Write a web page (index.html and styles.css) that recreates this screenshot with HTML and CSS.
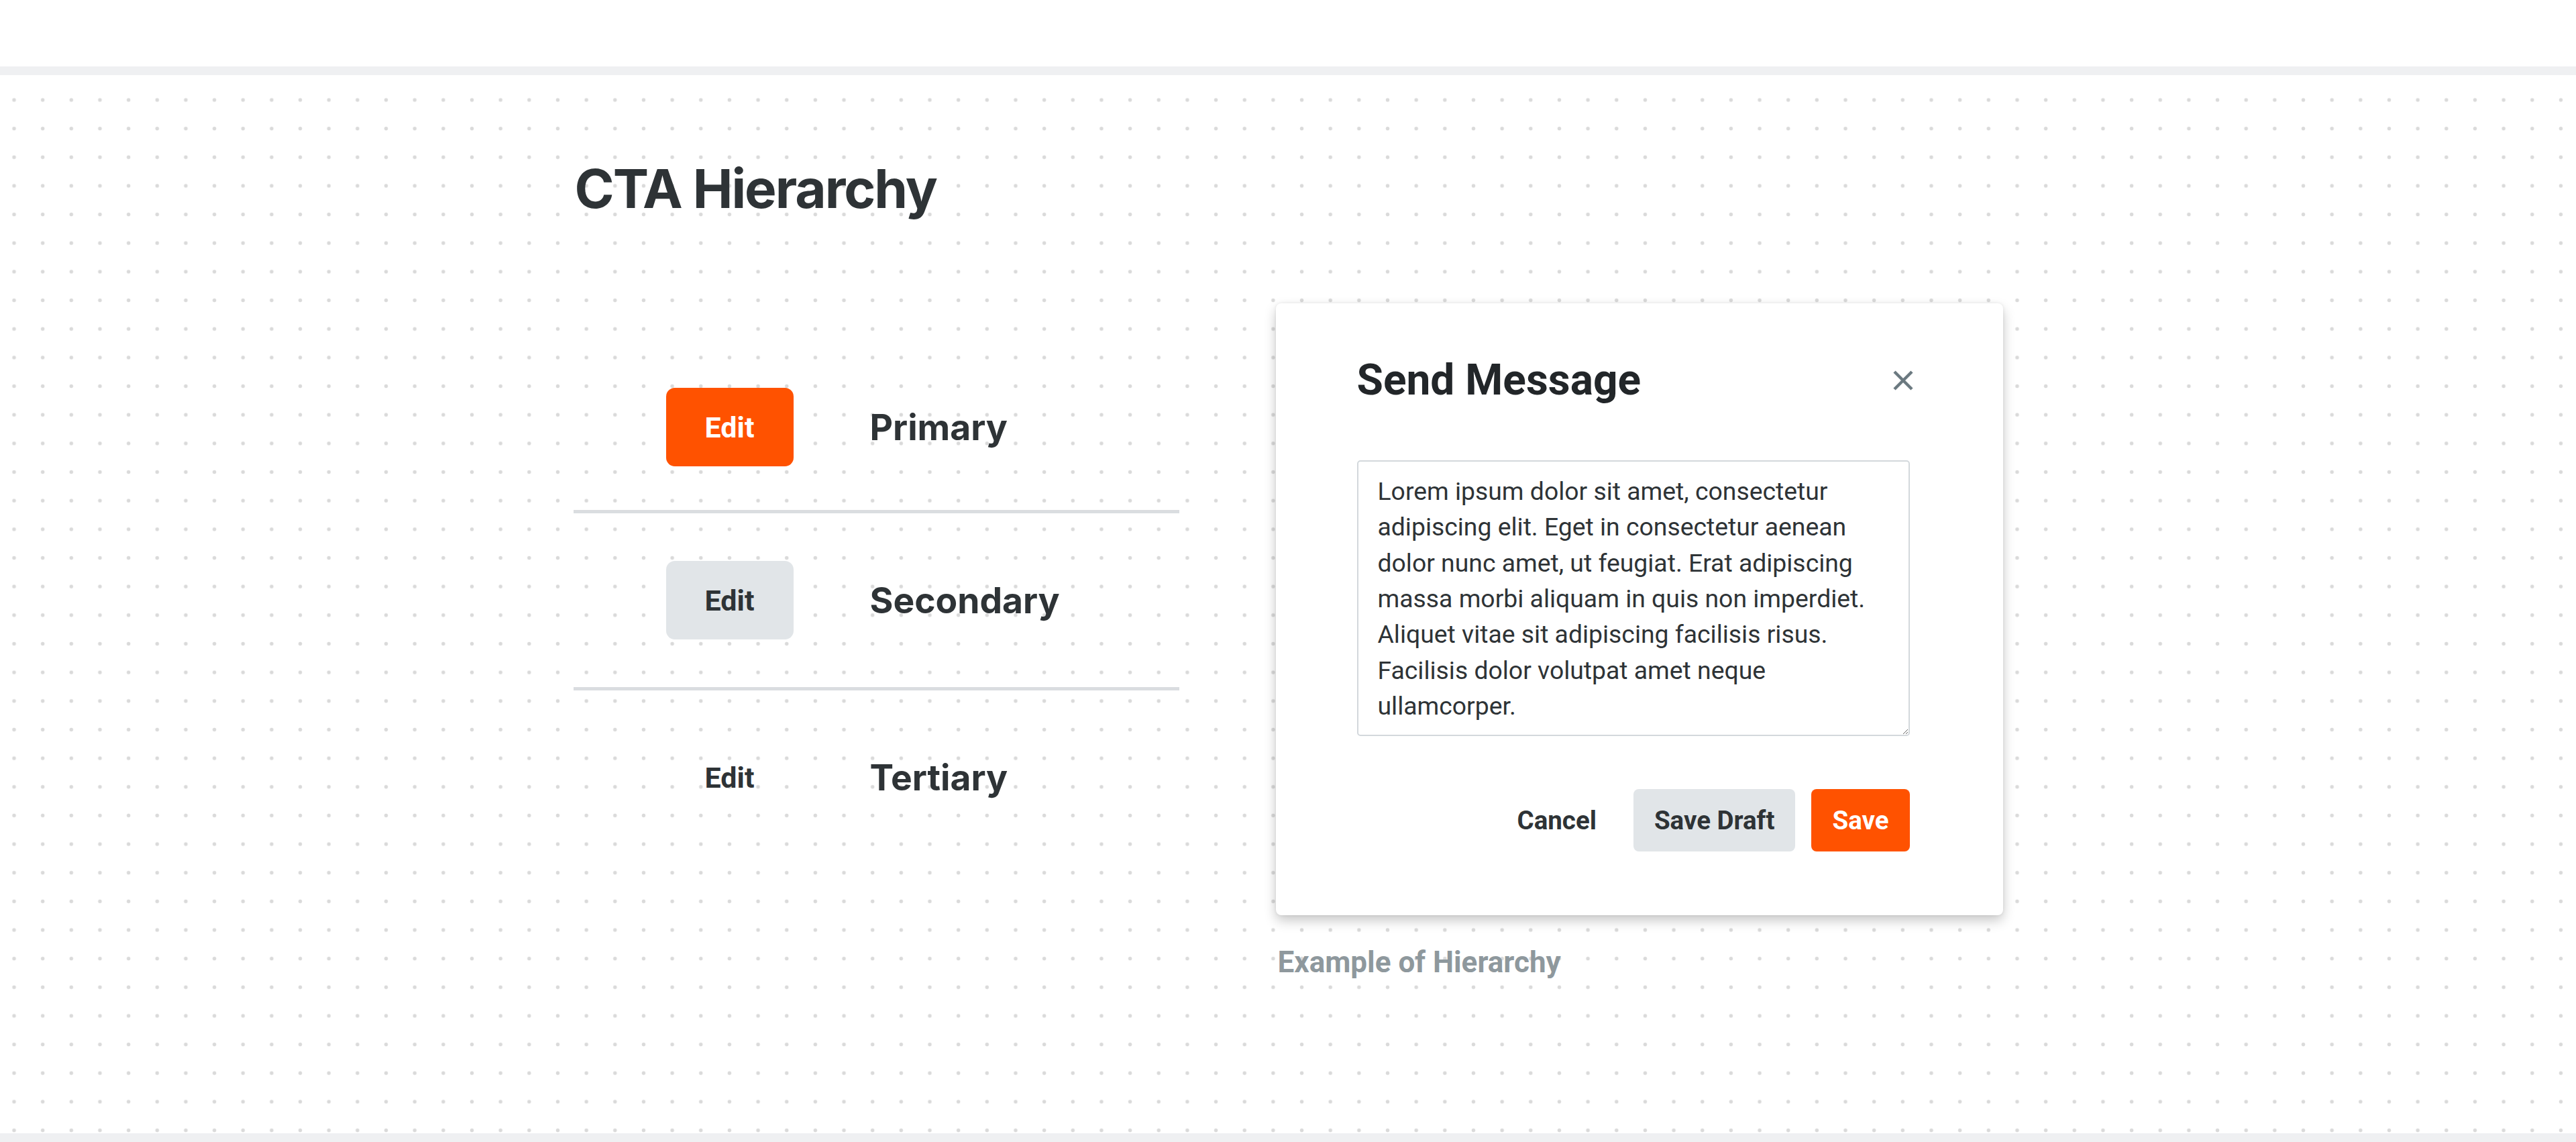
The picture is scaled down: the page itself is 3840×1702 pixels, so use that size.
FILE: index.html
```html
<!DOCTYPE html>
<html lang="en">
<head>
    <meta charset="UTF-8">
    <meta name="viewport" content="width=device-width, initial-scale=1.0">
    <title>CTA Hierarchy</title>
    <link rel="stylesheet" href="styles.css">
</head>
<body>
    <div class="topbar"></div>
    <main class="canvas">
        <div class="container">
            <h1 class="page-title">CTA Hierarchy</h1>
            <div class="content">
                <div class="cta-list">
                    <div class="cta-row">
                        <button class="btn btn-primary">Edit</button>
                        <span class="cta-label">Primary</span>
                    </div>
                    <div class="cta-row">
                        <button class="btn btn-secondary">Edit</button>
                        <span class="cta-label">Secondary</span>
                    </div>
                    <div class="cta-row">
                        <button class="btn btn-tertiary">Edit</button>
                        <span class="cta-label">Tertiary</span>
                    </div>
                </div>
                <div class="example">
                    <div class="modal">
                        <div class="modal-header">
                            <h2>Send Message</h2>
                            <svg class="close-icon" width="32" height="32" viewBox="0 0 32 32">
                                <path d="M3 3 L29 29 M29 3 L3 29" stroke="#6b7980" stroke-width="4.5" fill="none"/>
                            </svg>
                        </div>
                        <textarea class="message">Lorem ipsum dolor sit amet, consectetur
adipiscing elit. Eget in consectetur aenean
dolor nunc amet, ut feugiat. Erat adipiscing
massa morbi aliquam in quis non imperdiet.
Aliquet vitae sit adipiscing facilisis risus.
Facilisis dolor volutpat amet neque
ullamcorper.</textarea>
                        <div class="modal-footer">
                            <button class="btn-sm btn-tertiary">Cancel</button>
                            <button class="btn-sm btn-secondary">Save Draft</button>
                            <button class="btn-sm btn-primary">Save</button>
                        </div>
                    </div>
                    <p class="caption">Example of Hierarchy</p>
                </div>
            </div>
        </div>
    </main>
    <div class="bottombar"></div>
</body>
</html>
```

FILE: styles.css
```css
body {
    margin: 0;
    font-family: Roboto, "Liberation Sans", sans-serif;
    color: #2e3336;
}
.topbar {
    height: 99px;
    background: #fff;
    border-bottom: 13px solid #eff0f2;
}
.bottombar {
    height: 13px;
    background: #eff0f2;
}
.canvas {
    height: 1577px;
    background-color: #fff;
    background-image: radial-gradient(circle, #dadada 2.4px, rgba(218, 218, 218, 0) 3.2px);
    background-size: 42.67px 42.67px;
    background-position: -0.33px 15.67px;
    overflow: hidden;
}
.container {
    width: 2131px;
    margin: 0 auto;
    padding-top: 120px;
}
.page-title {
    margin: 0 0 0 2px;
    font-family: Inter, sans-serif;
    font-size: 80px;
    font-weight: 700;
    letter-spacing: -2px;
    line-height: 97px;
    color: #2e3336;
}
.content {
    display: flex;
    align-items: flex-start;
    gap: 144px;
    margin-top: 123px;
}
.cta-list {
    width: 903px;
    margin-top: 61px;
}
.cta-row {
    display: flex;
    align-items: center;
    gap: 114px;
    height: 259px;
    padding-left: 138px;
}
.cta-row:first-child {
    height: 247px;
}
.cta-row + .cta-row {
    border-top: 5px solid #dadde0;
}
.cta-label {
    font-family: Inter, sans-serif;
    font-size: 53.33px;
    font-weight: 700;
    color: #2e3336;
}
.btn {
    width: 190px;
    height: 117px;
    border: none;
    border-radius: 13px;
    font-family: Roboto, sans-serif;
    font-size: 43px;
    font-weight: 700;
    cursor: pointer;
}
.btn-primary {
    background: #ff5200;
    color: #fff;
}
.btn-secondary {
    background: #e1e5e8;
    color: #2e3336;
}
.btn-tertiary {
    background: transparent;
    color: #2e3336;
}
.modal {
    width: 1084px;
    box-sizing: border-box;
    padding: 77px 139px 95px 121px;
    background: #fff;
    border-radius: 8px;
    box-shadow: 0 8px 18px rgba(0, 0, 0, 0.22), 0 0 4px rgba(0, 0, 0, 0.08);
}
.modal-header {
    display: flex;
    justify-content: space-between;
    align-items: center;
}
.modal-header h2 {
    margin: 0;
    font-size: 64px;
    font-weight: 700;
    line-height: 75px;
    color: #222629;
}
.close-icon {
    margin-right: -6px;
}
.message {
    display: block;
    width: 100%;
    height: 411px;
    box-sizing: border-box;
    margin-top: 82px;
    padding: 18px 12px 14px 29px;
    border: 2.67px solid #d3d8dc;
    border-radius: 5px;
    font-family: Roboto, sans-serif;
    font-size: 37.33px;
    line-height: 53.33px;
    color: #2e3336;
    overflow: hidden;
    resize: both;
}
.modal-footer {
    display: flex;
    justify-content: flex-end;
    align-items: center;
    gap: 24px;
    margin-top: 79px;
}
.btn-sm {
    height: 93px;
    padding: 0 31px;
    border: none;
    border-radius: 8px;
    font-family: Roboto, sans-serif;
    font-size: 38.5px;
    font-weight: 700;
    cursor: pointer;
}
.caption {
    margin: 44px 0 0 3px;
    font-size: 44px;
    font-weight: 700;
    line-height: 52px;
    color: #8e989d;
}
```
